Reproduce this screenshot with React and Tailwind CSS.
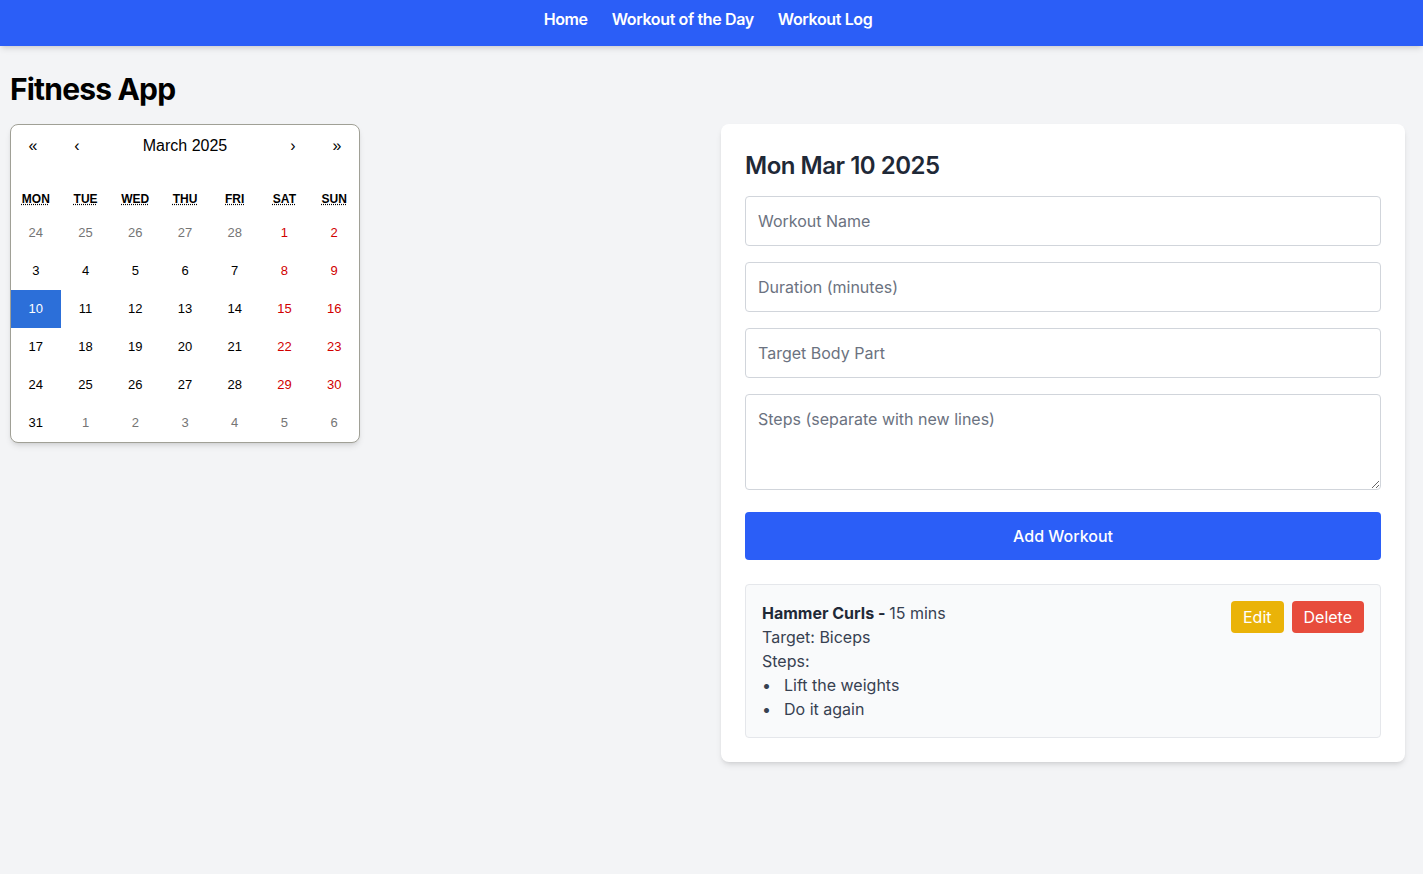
import React from "react";

const weeks = [
  [[24, "n"], [25, "n"], [26, "n"], [27, "n"], [28, "n"], [1, "w"], [2, "w"]],
  [[3, ""], [4, ""], [5, ""], [6, ""], [7, ""], [8, "w"], [9, "w"]],
  [[10, "a"], [11, ""], [12, ""], [13, ""], [14, ""], [15, "w"], [16, "w"]],
  [[17, ""], [18, ""], [19, ""], [20, ""], [21, ""], [22, "w"], [23, "w"]],
  [[24, ""], [25, ""], [26, ""], [27, ""], [28, ""], [29, "w"], [30, "w"]],
  [[31, ""], [1, "n"], [2, "n"], [3, "n"], [4, "n"], [5, "n"], [6, "n"]],
];

const days = ["MON", "TUE", "WED", "THU", "FRI", "SAT", "SUN"];

function Calendar() {
  return (
    <div
      className="w-[350px] bg-white border border-[#a0a096] rounded-lg shadow-md overflow-hidden text-black"
      style={{ fontFamily: '"Liberation Sans", Arial, sans-serif' }}
    >
      <div className="flex h-[44px] mb-4 items-center text-[16px] pb-[2px]">
        <button className="w-[44px] h-full text-[16px]">«</button>
        <button className="w-[44px] h-full text-[16px]">‹</button>
        <div className="flex-1 text-center">March 2025</div>
        <button className="w-[44px] h-full text-[16px]">›</button>
        <button className="w-[44px] h-full text-[16px]">»</button>
      </div>
      <div className="grid grid-cols-7 h-[29px] items-center pb-[1px]">
        {days.map((d) => (
          <div key={d} className="text-center text-[12px] font-bold">
            <span className="underline decoration-dotted">{d}</span>
          </div>
        ))}
      </div>
      {weeks.map((w, i) => (
        <div key={i} className="grid grid-cols-7">
          {w.map(([n, t], j) => (
            <div
              key={j}
              className={
                "h-[38px] flex items-center justify-center text-[13px] " +
                (t === "a"
                  ? "bg-[#2c6fd9] text-white"
                  : t === "n"
                  ? "text-[#757575]"
                  : t === "w"
                  ? "text-[#d10000]"
                  : "text-black")
              }
            >
              {n}
            </div>
          ))}
        </div>
      ))}
    </div>
  );
}

export default function App() {
  return (
    <div
      className="min-h-[874px] bg-[#f3f4f6]"
      style={{ fontFamily: "Inter, 'Noto Sans', sans-serif" }}
    >
      <nav className="h-[46px] bg-[#2b5ef7] shadow-md flex justify-center gap-6 pt-[7px] pr-[7px] tracking-[-0.023em]">
        <a className="text-white font-semibold text-base leading-6">Home</a>
        <a className="text-white font-semibold text-base leading-6">Workout of the Day</a>
        <a className="text-white font-semibold text-base leading-6">Workout Log</a>
      </nav>
      <div className="px-[10px]">
        <h1 className="text-[30px] leading-9 font-bold text-black mt-[25px] mb-[17px] tracking-[-0.027em]">
          Fitness App
        </h1>
        <div className="flex">
          <div className="w-[711px]">
            <Calendar />
          </div>
          <div className="w-[684px] bg-white rounded-lg shadow-md p-6">
            <h2 className="text-2xl leading-8 font-semibold text-[#1f2937] pt-[2px] mb-[14px] tracking-[-0.02em]">
              Mon Mar 10 2025
            </h2>
            <div className="flex flex-col gap-4">
              <input
                className="block w-full border border-[#d1d5db] rounded px-3 py-3 text-base leading-6 placeholder-[#6b7280] outline-none"
                placeholder="Workout Name"
              />
              <input
                className="block w-full border border-[#d1d5db] rounded px-3 py-3 text-base leading-6 placeholder-[#6b7280] outline-none"
                placeholder="Duration (minutes)"
              />
              <input
                className="block w-full border border-[#d1d5db] rounded px-3 py-3 text-base leading-6 placeholder-[#6b7280] outline-none"
                placeholder="Target Body Part"
              />
              <textarea
                className="block w-full h-24 border border-[#d1d5db] rounded px-3 py-3 text-base leading-6 placeholder-[#6b7280] outline-none"
                placeholder="Steps (separate with new lines)"
              />
            </div>
            <button className="mt-[22px] w-full h-12 bg-[#2b5ef7] text-white text-base font-medium rounded">
              Add Workout
            </button>
            <div className="mt-6 bg-[#f9fafb] border border-[#e5e7eb] rounded p-4 flex justify-between items-start">
              <div className="text-base leading-6 text-[#374151]">
                <div className="text-[#1f2937]">
                  <span className="font-bold">Hammer Curls - </span>
                  <span className="text-[#374151]">15 mins</span>
                </div>
                <div>Target: Biceps</div>
                <div>Steps:</div>
                <ul>
                  <li className="flex">
                    <span className="w-[22px]">•</span>
                    <span>Lift the weights</span>
                  </li>
                  <li className="flex">
                    <span className="w-[22px]">•</span>
                    <span>Do it again</span>
                  </li>
                </ul>
              </div>
              <div className="flex gap-2">
                <button className="h-8 px-3 bg-[#eab308] text-white rounded text-base">Edit</button>
                <button className="h-8 px-3 bg-[#e74c3c] text-white rounded text-base">Delete</button>
              </div>
            </div>
          </div>
        </div>
      </div>
    </div>
  );
}
